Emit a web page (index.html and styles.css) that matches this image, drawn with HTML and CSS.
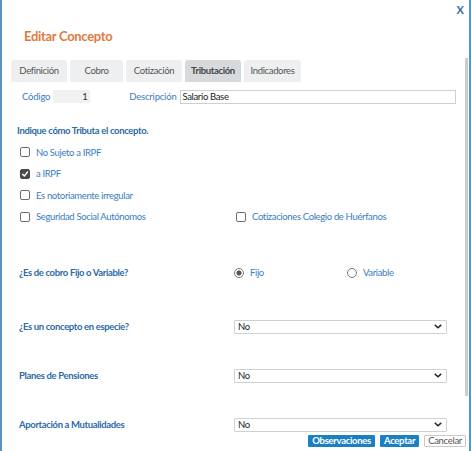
FILE: index.html
```html
<!DOCTYPE html>
<html lang="es">
<head>
<meta charset="utf-8">
<title>Editar Concepto</title>
<link rel="stylesheet" href="styles.css">
</head>
<body>
<div class="dialog">
  <div class="topbar"><span class="close">X</span></div>
  <h1 class="title">Editar Concepto</h1>

  <div class="tabs">
    <div class="tab">Definición</div>
    <div class="tab">Cobro</div>
    <div class="tab">Cotización</div>
    <div class="tab active">Tributación</div>
    <div class="tab">Indicadores</div>
  </div>

  <div class="idrow">
    <span class="lbl">Código</span>
    <span class="code">1</span>
    <span class="lbl desc-lbl">Descripción</span>
    <span class="desc">Salario Base</span>
  </div>

  <div class="section-title">Indique cómo Tributa el concepto.</div>

  <div class="checks">
    <div class="check"><span class="box"></span><span class="lbl">No Sujeto a IRPF</span></div>
    <div class="check"><span class="box on"><svg viewBox="0 0 10 10" width="8" height="8"><path d="M2 5.2 L4.2 7.4 L8.2 2.6" fill="none" stroke="#fff" stroke-width="1.8" stroke-linecap="round" stroke-linejoin="round"/></svg></span><span class="lbl">a IRPF</span></div>
    <div class="check"><span class="box"></span><span class="lbl">Es notoriamente irregular</span></div>
    <div class="check pair">
      <div class="half"><span class="box"></span><span class="lbl">Seguridad Social Autónomos</span></div>
      <div class="half"><span class="box"></span><span class="lbl">Cotizaciones Colegio de Huérfanos</span></div>
    </div>
  </div>

  <div class="qrow radios">
    <span class="q">¿Es de cobro Fijo o Variable?</span>
    <div class="opts">
      <span class="radio on"></span><span class="lbl">Fijo</span>
      <span class="radio second"></span><span class="lbl">Variable</span>
    </div>
  </div>

  <div class="qrow sel-row first">
    <span class="q">¿Es un concepto en especie?</span>
    <div class="select"><span>No</span><svg viewBox="0 0 10 6" width="8" height="5"><path d="M1 1 L5 4.6 L9 1" fill="none" stroke="#222" stroke-width="1.8"/></svg></div>
  </div>
  <div class="qrow sel-row">
    <span class="q">Planes de Pensiones</span>
    <div class="select"><span>No</span><svg viewBox="0 0 10 6" width="8" height="5"><path d="M1 1 L5 4.6 L9 1" fill="none" stroke="#222" stroke-width="1.8"/></svg></div>
  </div>
  <div class="qrow sel-row">
    <span class="q">Aportación a Mutualidades</span>
    <div class="select"><span>No</span><svg viewBox="0 0 10 6" width="8" height="5"><path d="M1 1 L5 4.6 L9 1" fill="none" stroke="#222" stroke-width="1.8"/></svg></div>
  </div>

  <div class="actions">
    <button class="btn primary obs">Observaciones</button>
    <button class="btn primary">Aceptar</button>
    <button class="btn">Cancelar</button>
  </div>

  <div class="scrollbar"></div>
</div>
</body>
</html>
```

FILE: styles.css
```css
html, body {
  margin: 0;
  padding: 0;
  background: #fff;
}

body {
  font-family: Lato, "Open Sans", sans-serif;
  font-size: 9.5px;
  letter-spacing: -0.35px;
  color: #333;
}

.dialog {
  position: relative;
  box-sizing: border-box;
  width: 471px;
  height: 451px;
  border-left: 2px solid #5b93c4;
  border-right: 2px solid #5b93c4;
  overflow: hidden;
}

.topbar {
  display: flex;
  justify-content: flex-end;
  padding: 3px 5px 0 0;
  height: 15px;
}

.close {
  color: #2f6fb0;
  font-weight: 700;
  font-size: 11px;
  letter-spacing: 0;
}

.title {
  margin: 9px 0 0 22px;
  font-size: 13px;
  letter-spacing: -0.3px;
  font-weight: 700;
  color: #e07a3c;
  line-height: 18px;
}

.tabs {
  display: flex;
  gap: 3px;
  margin: 15px 0 0 9px;
}

.tab {
  width: 56px;
  height: 22px;
  line-height: 22px;
  text-align: center;
  background: #eeeff0;
  color: #555;
  border-radius: 3px 3px 0 0;
}

.tab:nth-child(2) { width: 53px; }
.tab:nth-child(5) { width: 57px; }

.tab.active {
  background: #d7dadd;
  color: #444;
  font-weight: 700;
}

.lbl {
  color: #3a7cc0;
}

.idrow {
  display: flex;
  align-items: center;
  margin: 7px 0 0 20px;
  height: 15px;
}

.idrow .lbl {
  color: #3a7cc0;
  letter-spacing: -0.2px;
}

.code {
  box-sizing: border-box;
  width: 37px;
  height: 13px;
  margin-left: 3px;
  padding-right: 3px;
  background: #f1f1f1;
  text-align: right;
  line-height: 13px;
  color: #333;
}

.desc-lbl {
  margin-left: 39px;
}

.desc {
  box-sizing: border-box;
  width: 276px;
  height: 14px;
  margin-left: 3px;
  padding-left: 2px;
  border: 1px solid #cfcfcf;
  line-height: 12px;
  color: #222;
}

.section-title {
  margin: 20px 0 0 15px;
  font-weight: 700;
  color: #2d6aa7;
  height: 14px;
  line-height: 14px;
}

.checks {
  display: flex;
  flex-direction: column;
  gap: 7.5px;
  margin: 7px 0 0 18px;
}

.check, .half {
  display: flex;
  align-items: center;
  gap: 6px;
  height: 14px;
}

.check.pair {
  gap: 0;
}

.half:first-child {
  width: 216px;
}

.box {
  box-sizing: border-box;
  width: 10px;
  height: 10px;
  border: 1px solid #6d6d6d;
  border-radius: 2px;
  background: #fff;
  display: flex;
  align-items: center;
  justify-content: center;
}

.box.on {
  background: #4a4a4a;
  border-color: #4a4a4a;
}

.qrow {
  display: flex;
  align-items: center;
  margin-left: 17px;
}

.q {
  width: 213px;
  font-weight: 700;
  color: #2d6aa7;
}

.radios {
  margin-top: 42px;
  height: 14px;
}

.opts {
  display: flex;
  align-items: center;
}

.radio {
  box-sizing: border-box;
  width: 10px;
  height: 10px;
  border: 1px solid #777;
  border-radius: 50%;
  margin-right: 6px;
  margin-left: 2px;
  background: #fff;
}

.radio.on {
  background: radial-gradient(circle, #555 0 2.3px, #fff 2.8px);
}

.radio.second {
  margin-left: 83px;
}

.sel-row {
  margin-top: 35px;
  height: 14px;
}

.sel-row.first {
  margin-top: 40px;
}

.select {
  box-sizing: border-box;
  width: 213px;
  height: 14px;
  border: 1px solid #cfd2d4;
  border-radius: 1px;
  display: flex;
  align-items: center;
  justify-content: space-between;
  padding: 0 4px 0 3px;
  color: #222;
  margin-left: 2px;
}

.actions {
  display: flex;
  justify-content: flex-end;
  gap: 5px;
  margin: 3px 3px 0 0;
}

.btn {
  box-sizing: border-box;
  height: 12px;
  padding: 0 3px;
  border: 1px solid #c8c8c8;
  border-radius: 1px;
  background: #fff;
  color: #555;
  font-family: inherit;
  font-size: 9.5px;
  letter-spacing: -0.3px;
  line-height: 10px;
}

.btn.primary {
  background: #1a7fc3;
  border-color: #1a7fc3;
  color: #fff;
  font-weight: 700;
}

.scrollbar {
  position: absolute;
  right: 1px;
  top: 58px;
  width: 3px;
  height: 338px;
  background: #c9cecd;
}
```
